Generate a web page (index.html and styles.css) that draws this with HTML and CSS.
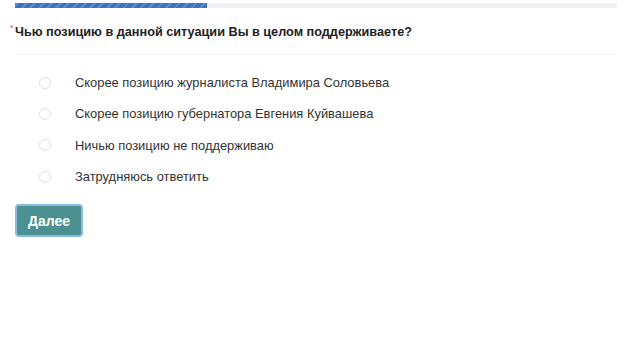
FILE: index.html
```html
<!DOCTYPE html>
<html lang="ru">
<head>
  <meta charset="UTF-8" />
  <meta name="viewport" content="width=device-width, initial-scale=1.0" />
  <title>Опрос</title>
  <link rel="stylesheet" href="styles.css">
</head>
<body>
  <div class="survey">
    <div class="progress">
      <div class="progress-fill"></div>
    </div>
    <div class="question">
      <span class="required">*</span>
      <h2 class="question-title">Чью позицию в данной ситуации Вы в целом поддерживаете?</h2>
    </div>
    <ul class="options">
      <li class="option"><span class="radio"></span>Скорее позицию журналиста Владимира Соловьева</li>
      <li class="option"><span class="radio"></span>Скорее позицию губернатора Евгения Куйвашева</li>
      <li class="option"><span class="radio"></span>Ничью позицию не поддерживаю</li>
      <li class="option"><span class="radio"></span>Затрудняюсь ответить</li>
    </ul>
    <button class="next">Далее</button>
  </div>
</body>
</html>
```

FILE: styles.css
```css
body {
  margin: 0;
  background-color: #fff;
  color: #2b2b2b;
  font-family: "Liberation Sans", Arial, sans-serif;
}

.survey {
  padding: 3px 23px 0 15px;
}

.progress {
  height: 5px;
  background-color: #edf0f4;
  border-radius: 1px;
}

.progress-fill {
  width: 192px;
  height: 100%;
  background: repeating-linear-gradient(
    -45deg,
    #3b72c2 0,
    #3b72c2 4px,
    #5a8ad2 4px,
    #5a8ad2 6px
  );
}

.question {
  position: relative;
  padding: 16px 0 14px;
  border-bottom: 1px solid #f2f3f5;
}

.required {
  position: absolute;
  left: -5px;
  top: 15px;
  color: #e0575b;
  font-size: 9px;
}

.question-title {
  margin: 0;
  font-size: 12.7px;
  font-weight: bold;
  color: #222;
  line-height: 16px;
}

.options {
  list-style: none;
  margin: 0;
  padding: 12px 0 0 24px;
}

.option {
  display: flex;
  align-items: center;
  height: 31.3px;
  font-size: 12.9px;
  color: #333;
}

.radio {
  width: 10px;
  height: 10px;
  border: 1px solid #e0e0e0;
  border-radius: 50%;
  margin-right: 24px;
}

.next {
  margin-top: 12px;
  padding: 0 11px;
  height: 33px;
  background-color: #4b9191;
  color: #fff;
  border: 2px solid #8fb8e0;
  border-radius: 4px;
  font-family: "Liberation Sans", Arial, sans-serif;
  font-size: 14px;
  font-weight: bold;
}
```
